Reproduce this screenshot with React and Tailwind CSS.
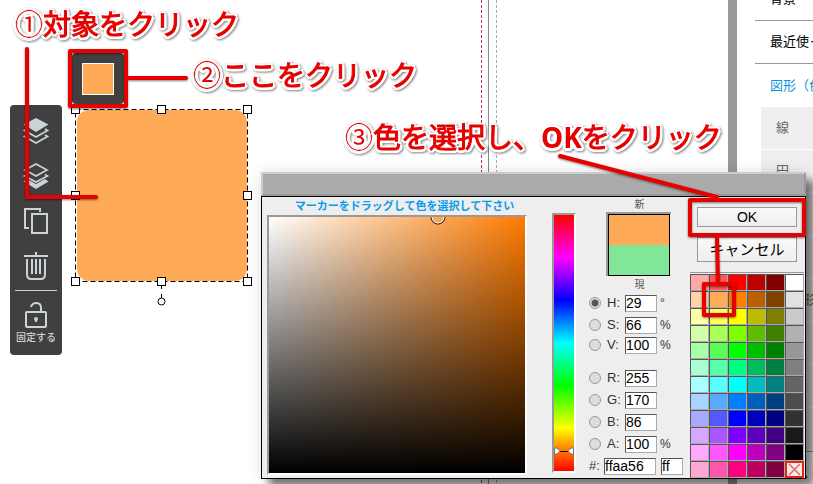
import React from "react";

const HUES = [0, 30, 60, 90, 120, 150, 180, 210, 240, 270, 300, 330];
const LIGHTNESS = [83, 67, 50, 37, 25];
const GRAYS = ["#ffffff", "#e1e1e1", "#cbcbcb", "#b1b1b1", "#989898", "#7f7f7f", "#656565", "#4c4c4c", "#323232", "#191919", "#000000"];

const SIDE_MENU = ["背景", "最近使った素材"];
const SIDE_SHAPES = ["線", "円", "四角", "三角", "多角形", "矢印", "星", "枠"];

const HSV_FIELDS = [
  { id: "hue", label: "H", value: "29", unit: "°", row: "h-[22px]" },
  { id: "saturation", label: "S", value: "66", unit: "%", row: "h-[22px]" },
  { id: "brightness", label: "V", value: "100", unit: "%", row: "h-[18px]" },
];
const RGB_FIELDS = [
  { id: "red", label: "R", value: "255", unit: "", row: "h-[22px]" },
  { id: "green", label: "G", value: "170", unit: "", row: "h-[22px]" },
  { id: "blue", label: "B", value: "86", unit: "", row: "h-[22px]" },
  { id: "alpha", label: "A", value: "100", unit: "%", row: "h-[22px]" },
];

const FIELD = "h-[17px] border border-t-[#555] border-l-[#555] border-r-[#aaa] border-b-[#aaa] bg-white text-sm leading-none text-black outline-none";
const SUNKEN = "border-2 border-t-[#999] border-l-[#999] border-r-white border-b-white";
const SWATCH = "h-[17px] border border-t-[#555] border-l-[#555] border-r-[#aaa] border-b-[#aaa]";

function ToolButton({ label, children }) {
  return (
    <button type="button" aria-label={label} className="flex h-[45px] w-full items-center justify-center">
      <svg width="28" height="30" viewBox="0 0 28 30" fill="none" stroke="#ccd3d6" strokeWidth="2">
        {children}
      </svg>
    </button>
  );
}

function Toolbar() {
  return (
    <div className="absolute top-[105px] left-[10px] flex w-[52px] flex-col items-center rounded bg-[#404040] pt-[3px] pb-2">
      <ToolButton label="前面へ">
        <path d="M14 2 26.500 8.500 14 16 1.500 8.500Z" fill="#ccd3d6" stroke="none" />
        <path d="M5 13 2.500 14.500 14 21 25.500 14.500 23 13M5 19 2.500 20.500 14 27 25.500 20.500 23 19" strokeWidth="1.700" />
      </ToolButton>
      <ToolButton label="背面へ">
        <path d="M14 3 25 9 14 15 3 9ZM5 13.500 2.500 15 14 21 25.500 15 23 13.500" strokeWidth="1.700" />
        <path d="M5 18 1.500 20.500 14 28 26.500 20.500 23 18 14 23Z" fill="#ccd3d6" stroke="none" />
      </ToolButton>
      <ToolButton label="複製">
        <path d="M7 22H3V3H18V6M10 8H25V27H10Z" />
      </ToolButton>
      <ToolButton label="削除">
        <path d="M2 5H26M14 1V5M5 8V23Q5 28 9 28H19Q23 28 23 23V8M10 8V23M14 8V23M18 8V23" />
      </ToolButton>
      <div className="mt-0.5 h-px w-[42px] bg-[#ccd3d6]" />
      <button type="button" className="flex flex-col items-center pt-[8px] text-[10px] leading-[18px] font-medium text-[#ccd3d6]">
        <svg width="28" height="30" viewBox="0 0 28 30" fill="none" stroke="#ccd3d6" strokeWidth="2">
          <rect x="4" y="13" width="20" height="15" rx="1" />
          <path d="M9 8Q10 4 14.500 4 19 4 19 9V13" />
          <circle cx="14" cy="20" r="2" fill="#ccd3d6" stroke="none" />
          <path d="M14 20V23" />
        </svg>
        固定する
      </button>
    </div>
  );
}

function Selection() {
  const stops = [5, 91, 177];
  return (
    <svg className="absolute top-[104px] left-[70px]" width="184" height="204" viewBox="0 0 184 204" fill="white" stroke="black">
      <rect x="7" y="6" width="170" height="171" rx="12" fill="#ffaa56" stroke="none" />
      <rect x="5.500" y="5.500" width="172" height="172" fill="none" strokeDasharray="5 3" />
      <path d="M91.500 182V185M91.500 190V194" />
      <circle cx="91.500" cy="197.500" r="3.500" />
      {stops.map((y) =>
        stops
          .filter((x) => !(x === 91 && y === 91))
          .map((x) => <rect key={`${x}-${y}`} x={x - 3.5} y={y - 3.5} width="8" height="8" />)
      )}
    </svg>
  );
}

function Canvas() {
  return (
    <main className="relative flex-1 overflow-hidden bg-white">
      <svg className="absolute top-0 left-[480px]" width="20" height="100%">
        <path d="M1.500 0V2000" stroke="#c4207a" strokeDasharray="3 2" />
        <path d="M8.500 0V2000" stroke="#888" />
        <path d="M16.500 0V2000" stroke="#aaa" strokeDasharray="3 2" />
      </svg>
      <Toolbar />
      <button
        type="button"
        aria-label="塗りの色"
        className="absolute top-[53px] left-[72px] flex h-[51px] w-[52px] items-center justify-center rounded bg-[#404040]"
      >
        <span className="h-8 w-8 border border-white bg-[#ffaa56]" />
      </button>
      <Selection />
    </main>
  );
}

function Sidebar() {
  return (
    <aside className="w-[76px] shrink-0 overflow-hidden bg-white text-[13px] whitespace-nowrap">
      <nav className="-mt-[22px] pl-[18px]">
        {SIDE_MENU.map((item) => (
          <a key={item} href="#" className="flex h-[43px] items-center border-b border-[#999] pl-[15px] text-black">
            {item}
          </a>
        ))}
        <a href="#" className="flex h-[43px] items-center pl-[15px] text-[#0a93dd]">
          図形（色変更可）
        </a>
        <ul className="pl-[6px]">
          {SIDE_SHAPES.map((item) => (
            <li key={item} className="mb-px flex h-[42px] items-center bg-[#efefef] pl-[15px] text-[#666]">
              {item}
            </li>
          ))}
        </ul>
        <a href="#" className="flex h-[43px] items-center border-t border-[#999] pl-[15px] text-black">
          イラスト
        </a>
      </nav>
    </aside>
  );
}

function ColorField({ id, label, value, unit, row }) {
  return (
    <div className={`flex items-center ${row}`}>
      <input
        type="radio"
        name="channel"
        aria-label={label}
        defaultChecked={id === "hue"}
        className="h-3 w-3 shrink-0 appearance-none rounded-full border border-[#999] bg-[#ddd] checked:bg-[radial-gradient(circle,#555_0_3px,#ddd_4px)]"
      />
      <label htmlFor={id} className="w-6 shrink-0 pl-[6px] text-[13px] leading-4 text-[#333]">
        {label}:
      </label>
      <input id={id} defaultValue={value} className={`w-8 shrink-0 ${FIELD}`} />
      <span className="pl-[3px] text-xs text-[#333]">{unit}</span>
    </div>
  );
}

function Swatches() {
  return (
    <div className="mt-[10px] border-t border-[#999] pt-px">
      <div className="grid grid-cols-6">
        {HUES.map((hue, i) => (
          <React.Fragment key={hue}>
            {LIGHTNESS.map((l) => (
              <button
                key={l}
                type="button"
                aria-label={`hsl ${hue} ${l}`}
                className={SWATCH}
                style={{ backgroundColor: `hsl(${hue} 100% ${l}%)` }}
              />
            ))}
            {GRAYS[i] ? (
              <button type="button" aria-label={GRAYS[i]} className={SWATCH} style={{ backgroundColor: GRAYS[i] }} />
            ) : (
              <button type="button" aria-label="色なし" className="h-[17px] border-2 border-[#f02010] bg-[#eee]">
                <svg className="h-full w-full" viewBox="0 0 15 13" stroke="#ee6666" strokeWidth="1.500">
                  <path d="M2 1 13 12M13 1 2 12" />
                </svg>
              </button>
            )}
          </React.Fragment>
        ))}
      </div>
    </div>
  );
}

function ColorDialog() {
  return (
    <section
      role="dialog"
      aria-label="色の選択"
      className="absolute top-[172px] left-[261px] w-[545px] shadow-[8px_8px_8px_rgba(0,0,0,0.5),0_0_14px_rgba(0,0,0,0.12)]"
    >
      <div className="h-6 border-2 border-t-[#ccc] border-r-[#999] border-b-[#999] border-l-[#ccc] bg-[#aaa]" />
      <div className="flex border border-black bg-[#eee] pl-[5px]">
        <div className="w-[260px] pb-[3px]">
          <h2 className="pl-[15px] text-center text-[11px] leading-[18px] font-bold text-[#0a9bea]">
            マーカーをドラッグして色を選択して下さい
          </h2>
          <div className={`relative h-[260px] overflow-hidden bg-[#ff7b00] ${SUNKEN}`}>
            <div className="h-full bg-[linear-gradient(to_top,#000,transparent),linear-gradient(to_right,#fff,transparent)]" />
            <svg className="absolute -top-[8px] left-[161px]" width="16" height="16" fill="none">
              <circle cx="8" cy="8" r="7" stroke="black" />
              <circle cx="8" cy="8" r="6" stroke="white" />
            </svg>
          </div>
        </div>
        <div className={`relative mt-4 ml-[25px] h-[260px] w-6 ${SUNKEN} bg-[linear-gradient(to_bottom,#f00,#f0f,#00f,#0ff,#0f0,#ff0,#f00)]`}>
          <svg className="absolute bottom-[16px] left-0" width="20" height="8" stroke="#777" fill="white">
            <path d="M6 4.500H14" stroke="black" />
            <path d="M.5 1H3L6 4 3 7H.5ZM19.500 1H17L14 4 17 7H19.500Z" />
          </svg>
        </div>
        <div className="ml-[13px] w-[101px]">
          <div className="text-center text-[10px] leading-[15px] text-[#555]">新</div>
          <div className="ml-[17px] h-16 w-[65px] border-t-2 border-l-2 border-[#999]">
            <div className="flex h-[62px] w-[62px] flex-col border border-black">
              <div className="flex-1 bg-[#ffaa56]" />
              <div className="flex-1 bg-[#82e698]" />
            </div>
          </div>
          <div className="h-4 text-center text-[10px] leading-[18px] text-[#555]">現</div>
          {HSV_FIELDS.map((field) => (
            <ColorField key={field.id} {...field} />
          ))}
          <div className="mt-[13px]">
            {RGB_FIELDS.map((field) => (
              <ColorField key={field.id} {...field} />
            ))}
          </div>
          <div className="flex h-[22px] items-center">
            <label htmlFor="hex" className="w-[15px] text-[13px] leading-4 text-[#333]">
              #:
            </label>
            <input id="hex" defaultValue="ffaa56" className={`w-[52px] ${FIELD}`} />
            <input aria-label="透明度" defaultValue="ff" className={`ml-[5px] w-[22px] ${FIELD}`} />
          </div>
        </div>
        <div className="w-[114px] pt-[10px]">
          <div className="flex flex-col gap-[10px] px-[7px] text-black">
            <button type="button" className="h-5 border border-[#999] bg-linear-to-b from-[#fafafa] to-[#eee] text-sm leading-none">
              OK
            </button>
            <button type="button" className="h-[25px] border border-[#999] bg-linear-to-b from-[#fafafa] to-[#eee] text-[15px] leading-none">
              キャンセル
            </button>
          </div>
          <Swatches />
        </div>
      </div>
    </section>
  );
}

function Note({ number, className, children }) {
  return (
    <p
      className={`absolute font-['Noto_Sans_CJK_JP',sans-serif] text-[28px] leading-9 whitespace-nowrap text-[#e60000] drop-shadow-[1px_1px_1px_rgba(0,0,0,0.5)] [text-shadow:2px_0_white,-2px_0_white,0_2px_white,0_-2px_white,2px_2px_white,-2px_2px_white,2px_-2px_white,-2px_-2px_white,3px_1px_white,-3px_1px_white,1px_3px_white,-1px_3px_white] ${className}`}
    >
      {number}
      <span className="[-webkit-text-stroke:1px_#e60000]">{children}</span>
    </p>
  );
}

function Notes() {
  return (
    <div className="pointer-events-none absolute inset-0">
      <Note number="①" className="top-[5px] left-[15px]">
        対象をクリック
      </Note>
      <Note number="②" className="top-[56px] left-[193px]">
        ここをクリック
      </Note>
      <Note number="③" className="top-[118px] left-[345px]">
        色を選択し、<b className="font-['Noto_Sans'] [-webkit-text-stroke:0]">OK</b>をクリック
      </Note>
      <svg
        className="absolute inset-0 h-full w-full drop-shadow-[0_1px_1px_rgba(0,0,0,0.5)]"
        fill="none"
        stroke="#e60000"
        strokeWidth="4"
        strokeLinecap="round"
        strokeLinejoin="round"
      >
        <path d="M27 49V197H96" />
        <rect x="70" y="51" width="56" height="55" />
        <path d="M126 78H186" />
        <path d="M560 156 717 197M717 236 718 283" />
        <rect x="690" y="200" width="114" height="35" />
        <rect x="704" y="284" width="30" height="31" />
      </svg>
    </div>
  );
}

export default function App() {
  return (
    <div className="relative flex h-screen overflow-hidden font-['Liberation_Sans','Noto_Sans_CJK_JP',sans-serif]">
      <Canvas />
      <div className="w-[9px] shrink-0 bg-[#999]" />
      <Sidebar />
      <ColorDialog />
      <Notes />
    </div>
  );
}
